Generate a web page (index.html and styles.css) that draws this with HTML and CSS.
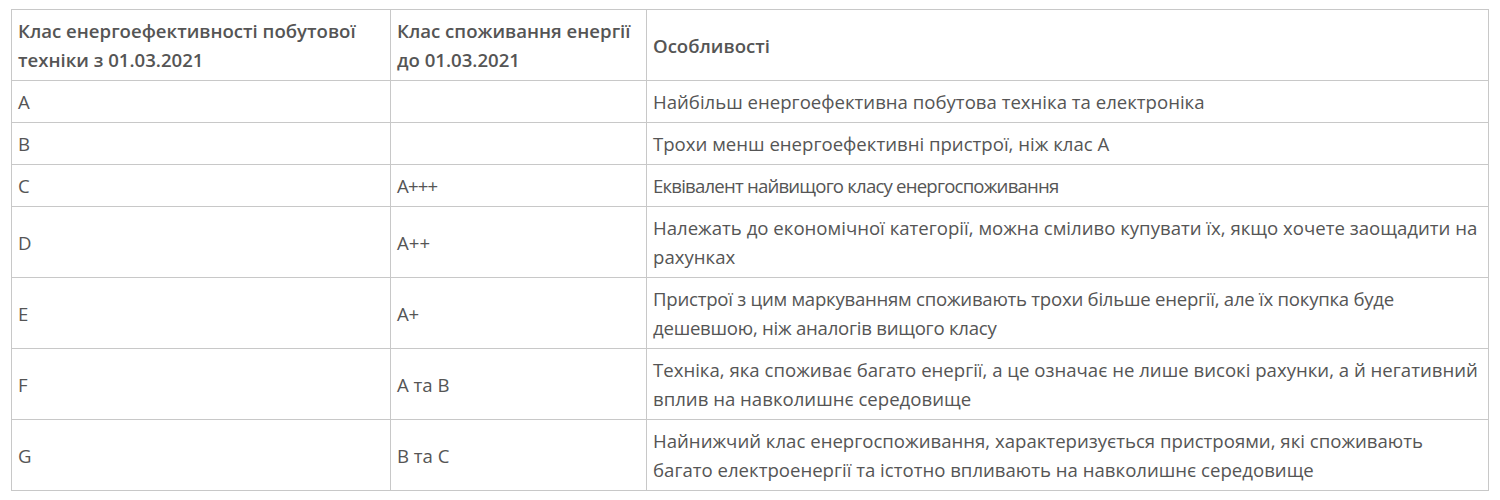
FILE: index.html
```html
<!DOCTYPE html>
<html lang="uk">
<head>
<meta charset="utf-8">
<link rel="stylesheet" href="styles.css">
</head>
<body>
<div class="page">
<table class="energy">
  <colgroup>
    <col class="c1"><col class="c2"><col class="c3">
  </colgroup>
  <thead>
    <tr>
      <th>Клас енергоефективності побутової техніки з 01.03.2021</th>
      <th>Клас споживання енергії до 01.03.2021</th>
      <th>Особливості</th>
    </tr>
  </thead>
  <tbody>
    <tr><td>A</td><td></td><td>Найбільш енергоефективна побутова техніка та електроніка</td></tr>
    <tr><td>B</td><td></td><td>Трохи менш енергоефективні пристрої, ніж клас А</td></tr>
    <tr class="tight-c"><td>C</td><td>A+++</td><td>Еквівалент найвищого класу енергоспоживання</td></tr>
    <tr><td>D</td><td>A++</td><td>Належать до економічної категорії, можна сміливо купувати їх, якщо хочете заощадити на рахунках</td></tr>
    <tr class="tight-e"><td>E</td><td>A+</td><td>Пристрої з цим маркуванням споживають трохи більше енергії, але їх покупка буде дешевшою, ніж аналогів вищого класу</td></tr>
    <tr><td>F</td><td>A та B</td><td>Техніка, яка споживає багато енергії, а це означає не лише високі рахунки, а й негативний вплив на навколишнє середовище</td></tr>
    <tr><td>G</td><td>B та C</td><td>Найнижчий клас енергоспоживання, характеризується пристроями, які споживають багато електроенергії та істотно впливають на навколишнє середовище</td></tr>
  </tbody>
</table>
<p class="after">Маркування з новими класами енергоефективності з'явиться на побутовій техніці, яку виробляють після 1 березня 2021 року, а стара техніка буде продаватися з попередніми етикетками.</p>
</div>
</body>
</html>
```

FILE: styles.css
```css
html, body {
  margin: 0;
  padding: 0;
  background: #ffffff;
}

.page {
  padding: 9px 11px 0 11px;
  font-family: "Open Sans", "Noto Sans", sans-serif;
  font-size: 18.6px;
  color: #555555;
}

.energy {
  width: 1478px;
  border-collapse: collapse;
  border: 1px solid #cbcbcb;
  table-layout: fixed;
}

.c1 { width: 379px; }
.c2 { width: 256px; }
.c3 { width: auto; }

.energy th,
.energy td {
  border: 1px solid #c8c8c8;
  padding: 6px 8px 6px 6px;
  line-height: 29px;
  text-align: left;
  vertical-align: middle;
}

.energy th {
  font-weight: 600;
  color: #555555;
}

.energy td {
  font-weight: 400;
}

.tight-c td { letter-spacing: -0.8px; }
.tight-e td { letter-spacing: -0.25px; }

.after {
  margin: 5px 0 0 0;
  line-height: 29px;
  color: #666666;
}
```
